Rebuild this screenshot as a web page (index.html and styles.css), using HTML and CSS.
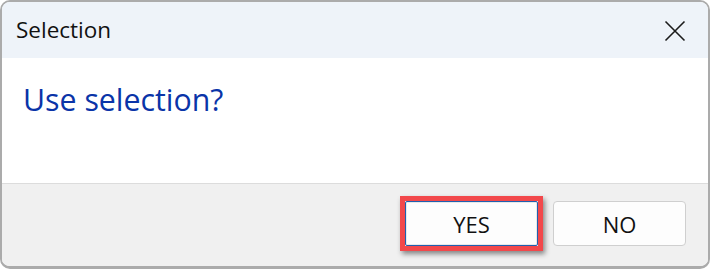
FILE: index.html
```html
<!DOCTYPE html>
<html>
<head>
<meta charset="utf-8">
<link rel="stylesheet" href="styles.css">
</head>
<body>
<div class="window">
  <div class="titlebar">
    <span class="title">Selection</span>
    <svg class="close" width="22" height="22" viewBox="0 0 22 22"><path d="M1.5 1.5 L20.5 20.5 M20.5 1.5 L1.5 20.5" stroke="#1b1b1b" stroke-width="1.6" fill="none"/></svg>
  </div>
  <div class="content">
    <p class="question">Use selection?</p>
  </div>
  <div class="footer">
    <div class="highlight"><button class="btn btn-default">YES</button></div>
    <button class="btn">NO</button>
  </div>
</div>
</body>
</html>
```
FILE: styles.css
```css
html, body {
  margin: 0;
  padding: 0;
  background: #ffffff;
}
.window {
  box-sizing: border-box;
  width: 710px;
  height: 269px;
  border: 2px solid #ababab;
  border-bottom-width: 3px;
  border-radius: 10px;
  overflow: hidden;
  display: flex;
  flex-direction: column;
  font-family: "Open Sans", "Noto Sans", sans-serif;
}
.titlebar {
  height: 56px;
  flex: none;
  background: #eef3f9;
  display: flex;
  align-items: center;
  justify-content: space-between;
  padding: 0 22px 0 14px;
}
.title {
  font-size: 22.5px;
  color: #111111;
  position: relative;
  top: -1px;
}
.close {
  display: block;
  position: relative;
  top: 1px;
}
.content {
  background: #ffffff;
  height: 125px;
  flex: none;
  padding: 0 0 0 21px;
}
.question {
  margin: 0;
  padding-top: 20px;
  font-size: 30.3px;
  line-height: 44px;
  color: #0a34a8;
}
.footer {
  flex: 1;
  background: #f0f0f0;
  border-top: 1px solid #dcdcdc;
  display: flex;
  justify-content: flex-end;
  align-items: flex-start;
  padding: 12px 22px 0 0;
  gap: 10px;
}
.highlight {
  border: 5px solid #f2484b;
  box-shadow: 2px 3px 5px rgba(0, 0, 0, 0.45);
  display: flex;
}
.btn {
  box-sizing: border-box;
  width: 133px;
  height: 45px;
  margin: 0;
  padding: 0;
  background: #fdfdfd;
  border: 1px solid #cfcfcf;
  border-radius: 4px;
  font-family: "Open Sans", "Noto Sans", sans-serif;
  font-size: 22px;
  color: #111111;
}
.footer > .btn {
  margin-top: 5px;
}
.btn-default {
  border: 1px solid #1f5fb0;
  border-radius: 2px;
  box-shadow: inset 0 0 0 1px #e8e8e8;
}
```
